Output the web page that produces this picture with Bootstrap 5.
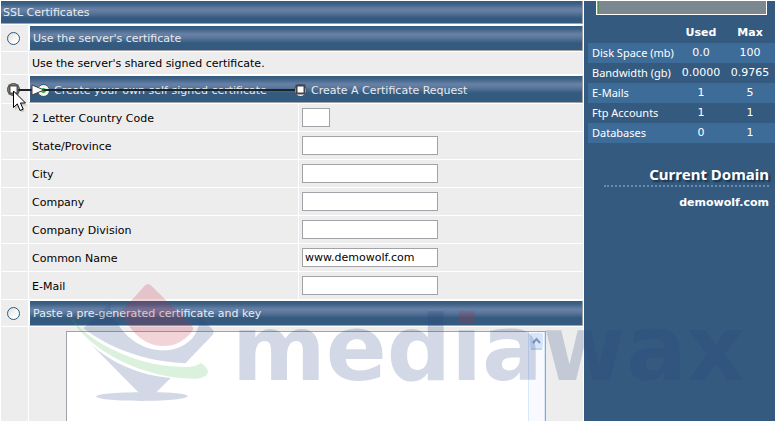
<!DOCTYPE html>
<html lang="en">
<head>
<meta charset="utf-8">
<meta name="viewport" content="width=device-width, initial-scale=1">
<title>SSL Certificates</title>
<link href="https://cdn.jsdelivr.net/npm/bootstrap@5.3.0/dist/css/bootstrap.min.css" rel="stylesheet">
<style>
:root { --navy: #345b7f; --stripe: #3e6c99; --edge: #a2a3a8; --cell: #ededed; }
body { font: 11px/16px "DejaVu Sans", sans-serif; color: #000; background: #fff; }
.cert-form { border-collapse: separate; border-spacing: 1px; table-layout: fixed; }
.cert-form td { background: var(--cell); height: 27px; padding: 0 3px; vertical-align: middle; }
.cert-form td:nth-child(2) { padding-top: 2px; }
.cert-form .title-row th { height: 23px; }
.cert-form .bar-row > * { height: 26px; }
.cert-form .note-row td { height: 22px; }
.cert-form .choice-row > * { height: 28px; }
.cert-form .paste-row td { height: 94px; padding: 4px 0 0; vertical-align: top; }
.cert-form th { padding: 2px 3px 0; font-weight: 400; color: #e9ecf0; border: 1px solid; border-color: #fff var(--edge) var(--edge) #fff;
  background: linear-gradient(#345b7f 0, #3d6186 3px, #6880a5 8px, #5f7a9f 11px, #345b7f 17px); background-clip: padding-box; }
.cert-form .title-row th { border-width: 0 1px 1px 0; padding: 2px 2px 0; }
.cert-form .pick { padding: 0 0 0 6px; }
.cert-form .choice-row label { padding-top: 2px; }
.dot-radio { appearance: none; width: 13px; height: 13px; margin: 0; border: 1px solid #2c5a83; border-radius: 50%;
  background: linear-gradient(135deg, #dcdcd7, #fff 70%); display: block; flex: none; }
.dot-radio.hot { border: 2px solid #d9a24c; outline: 1px solid #2c5a83; outline-offset: -1px; }
.dot-radio:checked { background: radial-gradient(circle, #35b535 2px, #f4f6f2 3px); }
.first-choice { width: 257px; }
.text-field { border: 1px solid var(--edge); background: #fff; width: 136px; height: 19px; padding: 0 2px; font: inherit; display: block; }
.text-field.tiny { width: 28px; }
.paste-box { width: 480px; max-width: 90%; height: 90px; border: 1px solid var(--edge); border-bottom: 0; background: #fff; }
.paste-box textarea { border: 0; resize: none; outline: 0; overflow: hidden; font: inherit; min-width: 0; }
.rail { width: 17px; background: #f8faff; border: solid #d9e7fb; border-width: 0 1px; }
.rail svg { display: block; }
.drag-trace { left: 0; top: 0; overflow: visible; pointer-events: none; z-index: 2; }
.side { width: 191px; background: var(--navy); color: #fff; margin: 1px 1px 1px 0; padding-left: 4px; }
.meter { height: 14px; margin: 0 8px; border: 1px solid #fff; border-top: 0; background: #7c8890; }
.meter div { width: 2px; height: 13px; background: linear-gradient(90deg, #8fc58f, #3f7f45); }
.usage { margin-top: 8px; table-layout: fixed; }
.usage th, .usage td { height: 20px; padding: 0; text-align: center; }
.usage tbody th { text-align: left; font: 11px/16px "Noto Sans", sans-serif; padding-left: 4px; white-space: nowrap; }
.usage tbody tr:nth-child(odd) { background: var(--stripe); }
.domain { margin: 21px 6px 0 16px; }
.domain h2 { font: 700 15px/20px "Noto Sans", sans-serif; margin: 0; text-shadow: 2px 2px 2px #16304a; border-bottom: 2px dotted #6a8bad; padding-bottom: 1px; }
.brand-mark { left: 66px; top: 283px; opacity: .2; pointer-events: none; z-index: 3; }
.brand-word { left: 232px; top: 290px; opacity: .2; pointer-events: none; z-index: 3; }
.brand-word text { font: 700 90px "DejaVu Sans", sans-serif; }
</style>
<script src="https://cdn.jsdelivr.net/npm/bootstrap@5.3.0/dist/js/bootstrap.bundle.min.js"></script>
</head>
<body>
<div class="position-relative d-flex overflow-hidden">
  <main class="flex-fill">
    <form>
      <table class="cert-form w-100">
        <colgroup><col style="width:27px"><col style="width:269px"><col></colgroup>
        <tr class="title-row"><th colspan="3">SSL Certificates</th></tr>
        <tr class="bar-row">
          <td class="pick"><input class="dot-radio" type="radio" name="mode" id="server"></td>
          <th colspan="2"><label for="server">Use the server's certificate</label></th>
        </tr>
        <tr class="note-row"><td></td><td colspan="2">Use the server's shared signed certificate.</td></tr>
        <tr class="choice-row">
          <td class="pick position-relative"><input class="dot-radio hot" type="radio" name="mode" id="create" aria-label="Create a certificate">
            <svg class="drag-trace position-absolute" width="310" height="42" viewBox="0 0 310 42" aria-hidden="true">
              <path d="M16 15H294" stroke="#1c252c" stroke-width="2"/>
              <path d="M31 10L43 15L31 20Z" fill="#fff" stroke="#444" stroke-width="1"/>
              <rect x="8.500" y="10.500" width="8" height="8" fill="#fff" stroke="#555" stroke-width="2"/>
              <rect x="295.500" y="10.500" width="8" height="8" fill="#fff" stroke="#444" stroke-width="2"/>
              <path d="M14 18.500L14 35.500L18 31.500L20.500 37.500L23.500 36.200L21 30.500L26 30.500Z" fill="#000" opacity=".15"/>
              <path d="M12.500 16V32.500L16.300 28.900L19 35.500L22.200 34.200L19.500 28H24.500Z" fill="#fff" stroke="#000"/>
            </svg>
          </td>
          <th colspan="2">
            <div class="d-flex align-items-center">
              <div class="first-choice d-flex align-items-center gap-1 ps-1"><input class="dot-radio" type="radio" name="kind" id="own" checked><label for="own">Create your own self signed certificate</label></div>
              <div class="d-flex align-items-center gap-1 ps-1"><input class="dot-radio" type="radio" name="kind" id="request"><label for="request">Create A Certificate Request</label></div>
            </div>
          </th>
        </tr>
        <tr><td></td><td><label for="country">2 Letter Country Code</label></td><td><input class="text-field tiny" id="country" maxlength="2"></td></tr>
        <tr><td></td><td><label for="state">State/Province</label></td><td><input class="text-field" id="state"></td></tr>
        <tr><td></td><td><label for="city">City</label></td><td><input class="text-field" id="city"></td></tr>
        <tr><td></td><td><label for="company">Company</label></td><td><input class="text-field" id="company"></td></tr>
        <tr><td></td><td><label for="division">Company Division</label></td><td><input class="text-field" id="division"></td></tr>
        <tr><td></td><td><label for="common">Common Name</label></td><td><input class="text-field" id="common" value="www.demowolf.com"></td></tr>
        <tr><td></td><td><label for="email">E-Mail</label></td><td><input class="text-field" id="email"></td></tr>
        <tr class="bar-row">
          <td class="pick"><input class="dot-radio" type="radio" name="mode" id="paste"></td>
          <th colspan="2"><label for="paste">Paste a pre-generated certificate and key</label></th>
        </tr>
        <tr class="paste-row"><td></td><td colspan="2">
          <div class="paste-box d-flex mx-auto">
            <textarea class="flex-fill" aria-label="Certificate and key"></textarea>
            <div class="rail"><svg width="15" height="18" viewBox="0 0 15 18" aria-hidden="true"><rect x="1" y="1" width="13" height="15" rx="2" fill="#d6e5fd"/><path d="M2 17H13" stroke="#8fb0d8"/><path d="M4 11L7.500 7L11 11" fill="none" stroke="#8296b3" stroke-width="2"/></svg></div>
          </div>
        </td></tr>
      </table>
    </form>
  </main>
  <aside class="side flex-shrink-0">
    <div class="meter"><div></div></div>
    <table class="usage w-100">
      <colgroup><col><col style="width:48px"><col style="width:50px"></colgroup>
      <thead><tr><td></td><th>Used</th><th>Max</th></tr></thead>
      <tbody>
        <tr><th scope="row">Disk Space (mb)</th><td>0.0</td><td>100</td></tr>
        <tr><th scope="row">Bandwidth (gb)</th><td>0.0000</td><td>0.9765</td></tr>
        <tr><th scope="row">E-Mails</th><td>1</td><td>5</td></tr>
        <tr><th scope="row">Ftp Accounts</th><td>1</td><td>1</td></tr>
        <tr><th scope="row">Databases</th><td>0</td><td>1</td></tr>
      </tbody>
    </table>
    <div class="domain text-end">
      <h2>Current Domain</h2>
      <div class="fw-bold mt-2">demowolf.com</div>
    </div>
  </aside>
  <svg class="brand-mark position-absolute" width="150" height="120" viewBox="198 39 450 360" aria-hidden="true">
    <path d="M434 47Q444 37 454 47L574 165Q583 173 577 183C553 215 520 231 483 228C430 224 390 185 362 127Z" fill="#c32742"/>
    <path d="M332 98L250 175C330 235 435 275 556 280L637 196Q644 186 637 178L597 137C605 190 560 241 490 241C430 241 380 205 356 165L332 138Z" fill="#26407f"/>
    <path d="M206 130C240 200 400 290 540 290C570 292 590 290 602 279C642 305 620 322 592 326C430 330 250 235 206 130Z" fill="#54bd5c"/>
    <path d="M272 222C335 280 415 315 512 324L469 367C600 368 602 392 425 393C245 392 245 368 415 367Z" fill="#26407f"/>
  </svg>
  <svg class="brand-word position-absolute" width="540" height="120" viewBox="0 0 540 120">
    <defs><linearGradient id="dot" gradientUnits="userSpaceOnUse" x1="0" y1="0" x2="0" y2="100"><stop offset=".36" stop-color="#c32742"/><stop offset=".36" stop-color="#26407f"/></linearGradient></defs>
    <text x="0" y="90" fill="#26407f">med<tspan fill="url(#dot)">i</tspan>awax</text>
  </svg>
</div>
</body>
</html>
